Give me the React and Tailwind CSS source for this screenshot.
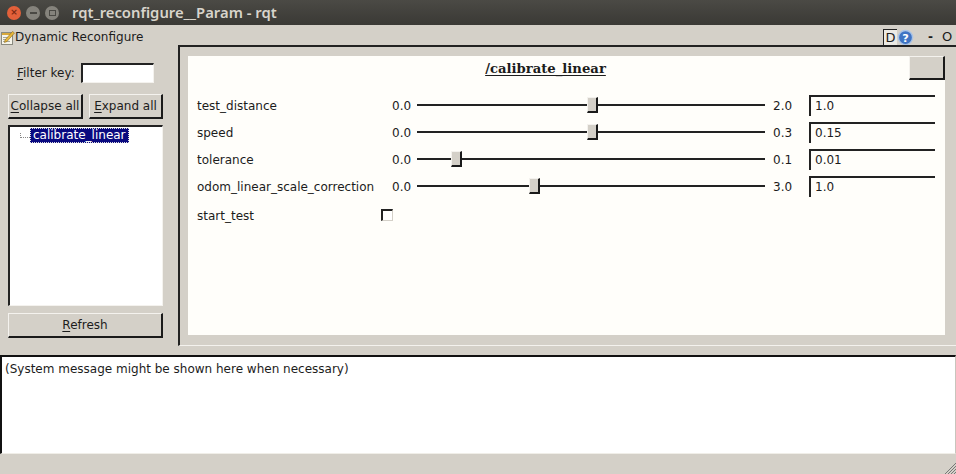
import React from 'react';

const params = [
  { name: 'test_distance', max: '2.0', value: '1.0', pos: 170 },
  { name: 'speed', max: '0.3', value: '0.15', pos: 170 },
  { name: 'tolerance', max: '0.1', value: '0.01', pos: 34 },
  { name: 'odom_linear_scale_correction', max: '3.0', value: '1.0', pos: 112 },
];

const bevel = 'border border-t-[#f4f2ee] border-l-[#f4f2ee] border-r-[#1a1a1a] border-b-[#1a1a1a] border-r-2 border-b-2';

const Mnemonic = ({ children }) => <span className="underline underline-offset-2">{children}</span>;

const ParamRow = ({ name, max, value, pos }) => (
  <div className="flex h-[27px] items-center">
    <div className="w-[204px] pl-[9px]">{name}</div>
    <div className="w-[25px]">0.0</div>
    <div className="relative mb-[1px] h-[2px] w-[348px] bg-[#222]">
      <div
        className={`absolute top-[-7px] h-[16px] w-[11px] bg-[#d4d0c8] ${bevel}`}
        style={{ left: pos }}
      />
    </div>
    <div className="w-[44px] pl-[8px]">{max}</div>
    <div className="h-[21px] w-[126px] border-t-2 border-l-2 border-[#222] pl-[4px] leading-[18px]">{value}</div>
  </div>
);

export default function App() {
  return (
    <div className="flex h-[474px] w-[956px] flex-col overflow-hidden bg-[#d4d0c8] font-['DejaVu_Sans',sans-serif] text-[12px] text-[#1c1c1c]">
      {/* window title bar */}
      <div className="flex h-[25px] items-center bg-gradient-to-b from-[#4b4a45] to-[#3a3935]">
        <div className="ml-[7px] flex gap-[5px]">
          <div className="flex h-[14px] w-[14px] items-center justify-center rounded-full bg-[#e2603a] text-[9px] font-bold leading-none text-[#7a2a14]">×</div>
          <div className="flex h-[14px] w-[14px] items-center justify-center rounded-full bg-[#85837c]">
            <div className="h-[2px] w-[7px] bg-[#4a4944]" />
          </div>
          <div className="flex h-[14px] w-[14px] items-center justify-center rounded-full bg-[#85837c]">
            <div className="h-[6px] w-[7px] border border-[#4a4944]" />
          </div>
        </div>
        <div className="ml-[13px] font-['Noto_Sans',sans-serif] text-[14.8px] font-semibold text-[#d8d4cb]">rqt_reconfigure__Param - rqt</div>
      </div>

      {/* dock title */}
      <div className="flex h-[20px] items-center pt-[4px]">
        <svg width="15" height="15" viewBox="0 0 15 15" className="shrink-0">
          <rect x="1.5" y="2.500" width="11" height="12" fill="#f6f4ea" stroke="#8a8a80" />
          <path d="M2 4h10" stroke="#d9a83a" strokeWidth="2" />
          <path d="M3 7.500h6M3 9.500h5M3 11.500h7" stroke="#a5a59a" />
          <path d="M5 10L12.500 1.500l2 1.500L7 11.500l-2.500 1z" fill="#e8b83c" stroke="#8a6a20" strokeWidth="0.6" />
        </svg>
        <div>Dynamic Reconfigure</div>
        <div className="ml-auto flex items-center">
          <div className="flex h-[16px] w-[14px] items-center justify-center border-t border-l border-[#222] bg-[#eceae4] text-[13px] leading-none">D</div>
          <svg width="17" height="17" viewBox="0 0 18 18">
            <circle cx="9" cy="9" r="7.500" fill="#3f74c4" stroke="#a9c3e6" strokeWidth="1.500" />
            <text x="9" y="13.500" textAnchor="middle" fontSize="12" fontWeight="700" fill="#fff" fontFamily="DejaVu Sans, sans-serif">?</text>
          </svg>
          <div className="ml-[14px] w-[8px] font-bold">-</div>
          <div className="ml-[6px] w-[14px] text-[13px]">O</div>
        </div>
      </div>

      <div className="flex h-[301px]">
        {/* left column */}
        <div className="flex w-[178px] shrink-0 flex-col pl-[8px] pr-[15px] pt-[18px]">
          <div className="flex h-[20px] items-center">
            <div className="ml-[9px] w-[64px]"><Mnemonic>F</Mnemonic>ilter key:</div>
            <div className="h-[20px] w-[73px] border-t-2 border-l-2 border-[#222] border-r border-b border-r-[#f4f2ee] border-b-[#f4f2ee] bg-white" />
          </div>
          <div className="mt-[11px] flex gap-[6px]">
            <button className={`h-[25px] w-[75px] whitespace-nowrap ${bevel}`}><Mnemonic>C</Mnemonic>ollapse all</button>
            <button className={`h-[25px] w-[74px] whitespace-nowrap ${bevel}`}><Mnemonic>E</Mnemonic>xpand all</button>
          </div>
          <div className="mt-[6px] h-[181px] w-[155px] border-t-2 border-l-2 border-[#222] border-r border-b border-r-[#f4f2ee] border-b-[#f4f2ee] bg-white">
            <div className="flex h-[16px] items-center pl-[10px]">
              <div className="h-[5px] w-[10px] border-l border-b border-dotted border-[#888]" />
              <div className="h-[15px] border border-dotted border-[#ddd] bg-[#0a0a80] px-[2px] leading-[12px] text-white">calibrate_linear</div>
            </div>
          </div>
          <button className={`mt-[7px] h-[25px] w-[155px] ${bevel}`}><Mnemonic>R</Mnemonic>efresh</button>
        </div>

        {/* right panel */}
        <div className="flex-1 border-t-2 border-l-2 border-[#222] pb-[10px] pl-[8px] pr-[11px] pt-[9px] border-b border-b-[#f4f2ee]">
          <div className="h-[279px] bg-[#fffefa]">
            <div className="relative flex h-[36px] justify-center pr-[42px]">
              <div className="pt-[3px] font-['DejaVu_Serif',serif] text-[13.2px] font-bold underline underline-offset-2">/calibrate_linear</div>
              <div className={`absolute right-0 top-0 h-[24px] w-[36px] bg-[#d4d0c8] ${bevel}`} />
            </div>
            {params.map((p) => (
              <ParamRow key={p.name} {...p} />
            ))}
            <div className="flex h-[32px] items-center">
              <div className="w-[193px] pl-[9px]">start_test</div>
              <div className="mb-[3px] h-[12px] w-[12px] border-t-2 border-l-2 border-[#222] border-r border-b border-r-[#d4d0c8] border-b-[#d4d0c8] bg-white" />
            </div>
          </div>
        </div>
      </div>

      {/* system message */}
      <div className="mt-[9px] h-[99px] border-t-2 border-l-2 border-[#111] border-r border-b border-r-[#c8c5bd] border-b-[#f0eee8] bg-white pl-[3px] pt-[3px]">
        (System message might be shown here when necessary)
      </div>

      {/* status bar */}
      <div className="flex flex-1 items-end justify-end">
        <svg width="12" height="12" viewBox="0 0 12 12">
          <path d="M12 1L1 12M12 4L4 12M12 7L7 12M12 10L10 12" stroke="#777" strokeWidth="1" />
        </svg>
      </div>
    </div>
  );
}
